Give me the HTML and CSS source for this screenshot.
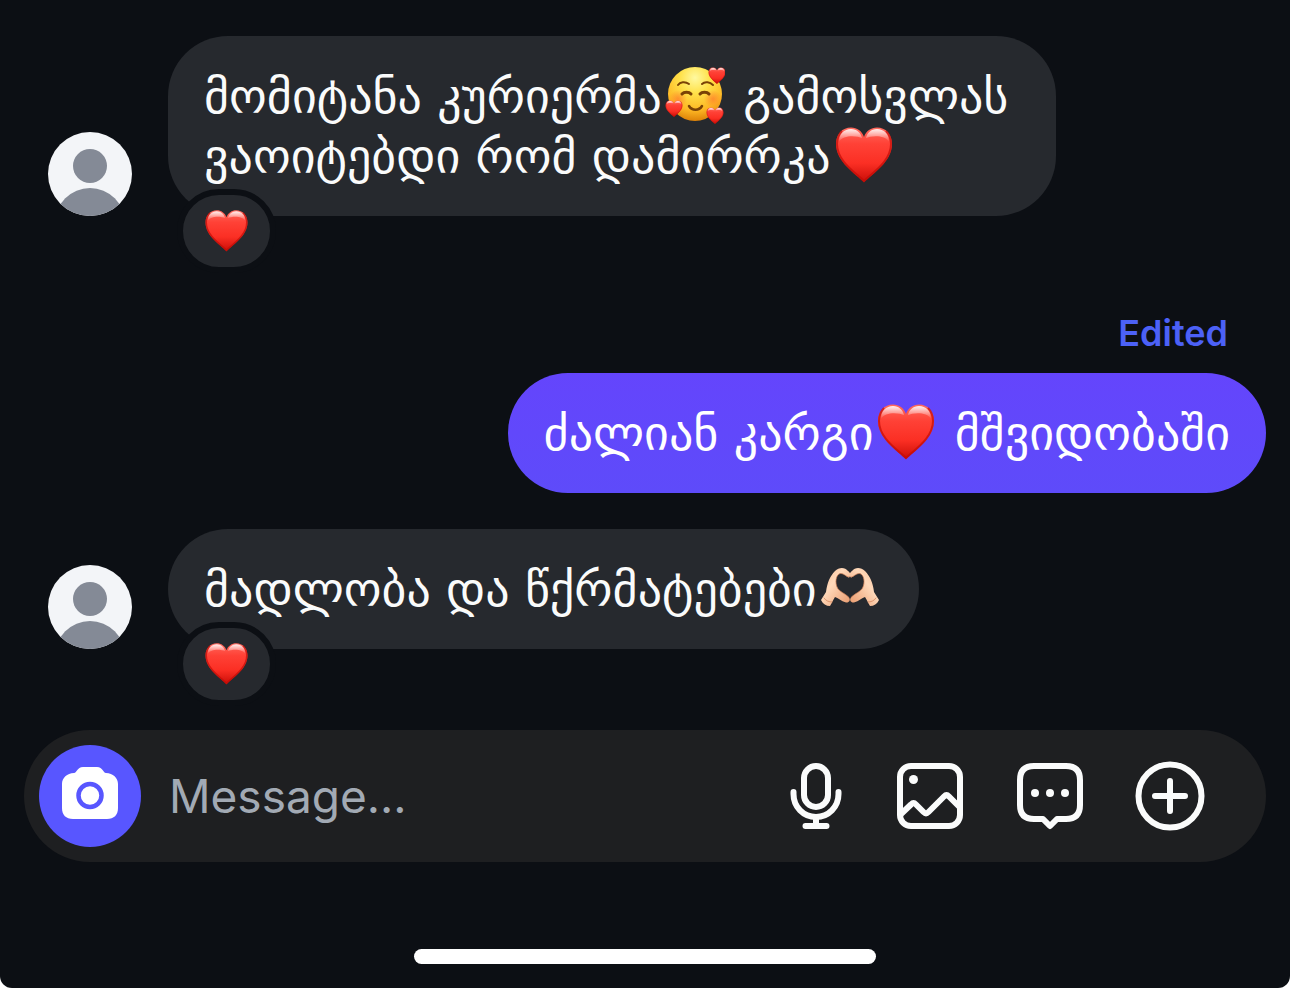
FILE: index.html
```
<!DOCTYPE html>
<html lang="ka">
<head>
    <meta charset="UTF-8">
    <meta name="viewport" content="width=device-width, initial-scale=1.0">
    <title>Chat</title>
    <link rel="stylesheet" href="styles.css">
</head>
<body>
    <!-- Shared emoji and avatar drawings -->
    <svg class="sprite" width="0" height="0" aria-hidden="true">
        <defs>
            <linearGradient id="heart-fill" x1="0" y1="0" x2="0" y2="1">
                <stop offset="0" stop-color="#ff6a5e"/>
                <stop offset="0.3" stop-color="#ff4136"/>
                <stop offset="0.65" stop-color="#fb2f24"/>
                <stop offset="1" stop-color="#c90d07"/>
            </linearGradient>
            <linearGradient id="heart-shine" x1="0" y1="0" x2="0" y2="1">
                <stop offset="0" stop-color="#fff" stop-opacity="0.9"/>
                <stop offset="1" stop-color="#fff" stop-opacity="0"/>
            </linearGradient>
            <radialGradient id="face-fill" cx="0.5" cy="0.2" r="0.8">
                <stop offset="0" stop-color="#fff9a0"/>
                <stop offset="0.35" stop-color="#ffe14a"/>
                <stop offset="0.75" stop-color="#fdb724"/>
                <stop offset="1" stop-color="#dd8208"/>
            </radialGradient>
            <radialGradient id="blush">
                <stop offset="0" stop-color="#ff7a2c" stop-opacity="0.7"/>
                <stop offset="1" stop-color="#ff7a2c" stop-opacity="0"/>
            </radialGradient>
            <linearGradient id="skin" x1="0" y1="0" x2="1" y2="1">
                <stop offset="0" stop-color="#f3b890"/>
                <stop offset="0.4" stop-color="#ffd9ba"/>
                <stop offset="1" stop-color="#e8976a"/>
            </linearGradient>
            <clipPath id="avatar-clip"><circle cx="42" cy="42" r="42"/></clipPath>
        </defs>
        <symbol id="heart" viewBox="0 0 60 60">
            <path d="M30 56.5C22 48 2 36 2 18C2 8 8.500 1.500 17 1.500C23 1.500 28 5 30 11C32 5 37 1.500 43 1.500C51.500 1.500 58 8 58 18C58 36 38 48 30 56.500Z" fill="url(#heart-fill)"/>
            <path d="M30 55C22 47 3 35.500 3 18C3 13 5 8 8 5M30 55C38 47 57 35.500 57 18C57 13 55 8 52 5" fill="none" stroke="#c30c06" stroke-width="2" stroke-opacity="0.7"/>
            <path d="M5 16C5 8 10 3 17 3C23 3 27 7 28 12C24 10 9 8 5 16ZM55 16C55 8 50 3 43 3C37 3 33 7 32 12C36 10 51 8 55 16Z" fill="url(#heart-shine)"/>
        </symbol>
        <symbol id="smiling-hearts" viewBox="0 0 60 60">
            <circle cx="30" cy="28" r="27" fill="url(#face-fill)"/>
            <circle cx="13" cy="33" r="9" fill="url(#blush)"/>
            <circle cx="48" cy="33" r="9" fill="url(#blush)"/>
            <g fill="none" stroke="#7a4206" stroke-width="2" stroke-linecap="round">
                <path d="M13 19C15 16 20 15 24 18M37 18C40 15 45 16 48 19"/>
                <path d="M17 28C19 25.500 24 25.500 26 28M35 28C37 25.500 42 25.500 44 28" stroke-width="3"/>
                <path d="M24 40C27 45 34 45 37 40" stroke-width="2.500"/>
            </g>
            <use href="#heart" x="43" y="1" width="18" height="18"/>
            <use href="#heart" x="0" y="34" width="18" height="18"/>
            <use href="#heart" x="41" y="41" width="18" height="18"/>
        </symbol>
        <symbol id="heart-hands" viewBox="0 0 60 60">
            <g id="left-hand">
                <path d="M1 41L6 33C7 24 10 17 15 12C19 8 25 8 28 12C31 14 31 17 29 18.500C26 18 23 13 19 15C16 17 15 23 17 28C19 33 25 34 29 38.500C31 41 29 44 26 43.500C21 42 18 39 15 38C13 41 12 44 10 47C6 47 3 45 1 41Z" fill="url(#skin)"/>
                <path d="M4 39C6 42 9 43 12 43M29 18C26 18 23 13 19 15C16 17 15 23 17 28C19 33 25 34 29 38.500" fill="none" stroke="#d07f55" stroke-width="1" stroke-opacity="0.7" stroke-linecap="round"/>
            </g>
            <use href="#left-hand" transform="matrix(-1 0 0 1 60 0)"/>
        </symbol>
        <symbol id="person" viewBox="0 0 84 84">
            <g clip-path="url(#avatar-clip)">
                <rect width="84" height="84" fill="#f3f5f8"/>
                <circle cx="42" cy="34" r="17" fill="#848a96"/>
                <circle cx="42" cy="91" r="35" fill="#848a96"/>
            </g>
        </symbol>
    </svg>

    <main class="chat">
        <div class="message">
            <svg class="avatar" role="img" aria-label="Profile"><use href="#person"/></svg>
            <div class="bubble">
                <p>მომიტანა კურიერმა<svg class="emoji" role="img" aria-label="🥰"><use href="#smiling-hearts"/></svg> გამოსვლას<br>ვაოიტებდი რომ დამირრკა<svg class="emoji" role="img" aria-label="❤️"><use href="#heart"/></svg></p>
                <button type="button" class="reaction" aria-label="❤️"><svg><use href="#heart"/></svg></button>
            </div>
        </div>

        <div class="message sent">
            <span class="edited">Edited</span>
            <div class="bubble">
                <p>ძალიან კარგი<svg class="emoji" role="img" aria-label="❤️"><use href="#heart"/></svg> მშვიდობაში</p>
            </div>
        </div>

        <div class="message">
            <svg class="avatar" role="img" aria-label="Profile"><use href="#person"/></svg>
            <div class="bubble">
                <p>მადლობა და წქრმატებები<svg class="emoji" role="img" aria-label="🫶🏻"><use href="#heart-hands"/></svg></p>
                <button type="button" class="reaction" aria-label="❤️"><svg><use href="#heart"/></svg></button>
            </div>
        </div>
    </main>

    <form class="composer">
        <button type="button" class="camera" aria-label="Camera">
            <svg viewBox="0 0 102 102">
                <path d="M35 28C38 28 38 22 44 22H58C64 22 64 28 67 28C74 28 79 33 79 39V63C79 70 75 74 68 74H34C27 74 23 70 23 63V39C23 33 28 28 35 28Z" fill="#fff"/>
                <circle cx="51" cy="50.500" r="11.500" fill="none" stroke="#5856ff" stroke-width="4.500"/>
            </svg>
        </button>
        <input type="text" id="message" name="message" placeholder="Message..." aria-label="Message">
        <button type="button" class="tool mic" aria-label="Voice message">
            <svg viewBox="0 0 60 72">
                <rect x="18" y="6" width="24" height="41" rx="12"/>
                <path d="M7.500 32V34C7.500 47 17.500 57 30 57S52.500 47 52.500 34V32M30 57V66M19.500 66H40.500"/>
            </svg>
        </button>
        <button type="button" class="tool" aria-label="Photo">
            <svg viewBox="0 0 72 72">
                <rect x="6" y="6" width="60" height="60" rx="11"/>
                <circle class="dot" cx="19.500" cy="19.500" r="4.500"/>
                <path d="M7 54L17 44.500Q19.500 42 22 44.500L29.500 52Q32 54.500 34.500 52L50 36.500Q52.500 34 55 36.500L65 46.500"/>
            </svg>
        </button>
        <button type="button" class="tool" aria-label="Sticker">
            <svg viewBox="0 0 72 72">
                <path d="M20 6H52Q66 6 66 20V45Q66 59 52 59H43L36 66L29 59H20Q6 59 6 45V20Q6 6 20 6Z"/>
                <circle class="dot" cx="21" cy="33" r="4"/>
                <circle class="dot" cx="36" cy="33" r="4"/>
                <circle class="dot" cx="51" cy="33" r="4"/>
            </svg>
        </button>
        <button type="button" class="tool" aria-label="More">
            <svg viewBox="0 0 72 72">
                <circle cx="36" cy="36" r="31.500"/>
                <path d="M21 36H51M36 21V51"/>
            </svg>
        </button>
    </form>

    <div class="home-indicator"></div>
</body>
</html>
```

FILE: styles.css
```
* {
    box-sizing: border-box;
}
html {
    background: #fff;
}
body {
    display: flex;
    flex-direction: column;
    min-height: 100vh;
    margin: 0;
    padding: 36px 24px 24px;
    background: #0c0f14;
    border-radius: 0 0 12px 12px;
    color: #fafbfb;
    font-family: Inter, "DejaVu Sans", sans-serif;
}
button {
    padding: 0;
    border: none;
    background: none;
    cursor: pointer;
}
svg {
    display: block;
}
.sprite {
    position: absolute;
}
.message {
    display: flex;
    align-items: flex-end;
    gap: 36px;
    padding-left: 24px;
}
.message.sent {
    flex-direction: column;
    gap: 16px;
    margin: 93px 0 36px;
    padding-left: 0;
}
.avatar {
    flex: none;
    width: 84px;
    height: 84px;
}
.bubble {
    position: relative;
    max-width: 888px;
    padding: 30px 36px;
    border-radius: 60px;
    background: #26292e;
}
.message:first-child .bubble {
    flex: 0 1 888px;
}
.bubble p {
    margin: 0;
    font-family: "DejaVu Sans", sans-serif;
    font-size: 48px;
    line-height: 60px;
}
.sent .bubble {
    background: linear-gradient(#6445fc, #5e4bfa);
    color: #fff;
}
.emoji {
    display: inline-block;
    width: 60px;
    height: 60px;
    margin: 0 3px;
    vertical-align: top;
}
.edited {
    padding-right: 38px;
    color: #4c61f7;
    font-size: 36px;
    font-weight: 600;
    line-height: 48px;
}
/* Sits over the lower left corner of the bubble */
.reaction {
    position: absolute;
    left: 9px;
    bottom: -57px;
    display: flex;
    align-items: center;
    justify-content: center;
    width: 99px;
    height: 84px;
    border: 6px solid #0c0f14;
    border-radius: 42px;
    background: #26292e;
}
.reaction svg {
    width: 45px;
    height: 45px;
}
.composer {
    display: flex;
    align-items: center;
    margin-top: 81px;
    padding: 15px 60px 15px 15px;
    border-radius: 66px;
    background: #1e1f21;
}
.camera {
    flex: none;
    width: 102px;
    height: 102px;
    border-radius: 50%;
    background: #5856ff;
}
.composer input {
    flex: 1;
    min-width: 0;
    padding: 0 28px;
    border: none;
    outline: none;
    background: none;
    color: #fafbfb;
    font-family: inherit;
    font-size: 46px;
}
.composer input::placeholder {
    color: #a2aab4;
    opacity: 1;
}
.tool {
    flex: none;
    width: 72px;
    height: 72px;
    margin-left: 48px;
}
.tool.mic {
    width: 60px;
    margin-left: 0;
}
.tool svg {
    fill: none;
    stroke: #fafbfb;
    stroke-width: 6;
    stroke-linecap: round;
    stroke-linejoin: round;
}
.tool .dot {
    fill: #fafbfb;
    stroke: none;
}
.home-indicator {
    width: 462px;
    max-width: 60%;
    height: 15px;
    margin: auto auto 0;
    border-radius: 8px;
    background: #fff;
}
```
